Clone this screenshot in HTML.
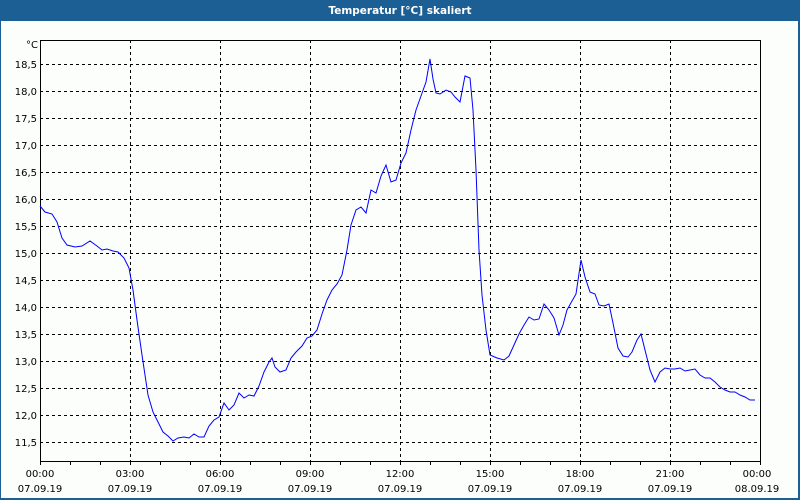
<!DOCTYPE html>
<html><head><style>
html,body{margin:0;padding:0;}
body{width:800px;height:500px;overflow:hidden;background:#1c5f95;font-family:"DejaVu Sans","Liberation Sans",sans-serif;}
</style></head><body>
<svg width="800" height="500" xmlns="http://www.w3.org/2000/svg" style="display:block">
<rect x="0" y="0" width="800" height="500" fill="#1c5f95"/>
<rect x="1" y="21" width="797" height="477" fill="#fcfefc"/>
<text x="400" y="14" fill="#fff" font-size="10.5" font-weight="bold" text-anchor="middle" font-family="DejaVu Sans, sans-serif">Temperatur [°C] skaliert</text>
<g stroke="#000" stroke-width="1" stroke-dasharray="3,3" fill="none" shape-rendering="crispEdges">
<path d="M40 64.5H760M40 91.5H760M40 118.5H760M40 145.5H760M40 172.5H760M40 199.5H760M40 226.5H760M40 253.5H760M40 280.5H760M40 307.5H760M40 334.5H760M40 361.5H760M40 388.5H760M40 415.5H760M40 442.5H760"/>
<path d="M130.5 40V461M220.5 40V461M310.5 40V461M400.5 40V461M490.5 40V461M580.5 40V461M670.5 40V461"/>
</g>
<g stroke="#000" fill="none" shape-rendering="crispEdges">
<path d="M40.5 40.5H760.5V461.5H40.5Z"/>
<path d="M70.5 461V465M100.5 461V465M130.5 461V465M160.5 461V465M190.5 461V465M220.5 461V465M250.5 461V465M280.5 461V465M310.5 461V465M340.5 461V465M370.5 461V465M400.5 461V465M430.5 461V465M460.5 461V465M490.5 461V465M520.5 461V465M550.5 461V465M580.5 461V465M610.5 461V465M640.5 461V465M670.5 461V465M700.5 461V465M730.5 461V465M760.5 461V465M40.5 461V465"/>
</g>
<g font-size="10" fill="#000" text-anchor="end">
<text x="38" y="48">°C</text>
<text x="37" y="68">18,5</text><text x="37" y="95">18,0</text><text x="37" y="122">17,5</text><text x="37" y="149">17,0</text><text x="37" y="176">16,5</text><text x="37" y="203">16,0</text><text x="37" y="230">15,5</text><text x="37" y="257">15,0</text><text x="37" y="284">14,5</text><text x="37" y="311">14,0</text><text x="37" y="338">13,5</text><text x="37" y="365">13,0</text><text x="37" y="392">12,5</text><text x="37" y="419">12,0</text><text x="37" y="446">11,5</text>
</g>
<g font-size="10" fill="#000" text-anchor="middle">
<text x="40" y="477">00:00</text><text x="40" y="492">07.09.19</text>
<text x="130" y="477">03:00</text><text x="130" y="492">07.09.19</text>
<text x="220" y="477">06:00</text><text x="220" y="492">07.09.19</text>
<text x="310" y="477">09:00</text><text x="310" y="492">07.09.19</text>
<text x="400" y="477">12:00</text><text x="400" y="492">07.09.19</text>
<text x="490" y="477">15:00</text><text x="490" y="492">07.09.19</text>
<text x="580" y="477">18:00</text><text x="580" y="492">07.09.19</text>
<text x="670" y="477">21:00</text><text x="670" y="492">07.09.19</text>
<text x="757" y="477">00:00</text><text x="757" y="492">08.09.19</text>
</g>
<polyline fill="none" stroke="#0000ff" stroke-width="1" points="40,206 45,212 52,214 57,222 62,238 67,245 75,247 82,246 90,241 97,246 102,250 107,249 113,251 118,252 124,258 129,268 133,290 137,320 142,355 148,395 153,412 158,422 163,432 168,436 173,441 178,438 184,437 189,438 194,434 199,437 204,437 209,426 214,420 219,417 224,403 229,410 234,405 239,393 244,398 249,395 254,396 259,386 264,372 269,362 272,358 275,367 280,372 286,370 291,358 296,352 302,346 307,338 312,336 317,330 322,314 327,300 332,290 337,284 342,275 347,250 351,225 356,210 361,207 366,213 371,190 376,193 381,176 386,165 391,182 396,180 401,163 406,153 411,130 416,110 421,96 426,82 430,59 433,79 436,93 440,94 446,90 451,92 455,97 460,102 465,76 470,78 473,110 476,170 479,250 482,295 486,330 490,355 497,358 504,360 509,356 514,345 519,334 524,325 529,317 534,320 539,319 544,304 549,310 554,318 559,335 563,325 567,310 572,301 576,294 581,260 585,277 590,292 595,294 599,305 604,306 609,304 613,323 618,348 623,356 628,357 632,352 637,340 641,334 645,350 650,370 655,382 660,372 665,368 670,369 675,369 680,368 685,371 690,370 695,369 700,375 705,378 710,378 715,382 720,387 725,390 730,392 735,392 740,395 745,397 750,400 755,400"/>
</svg>
</body></html>
